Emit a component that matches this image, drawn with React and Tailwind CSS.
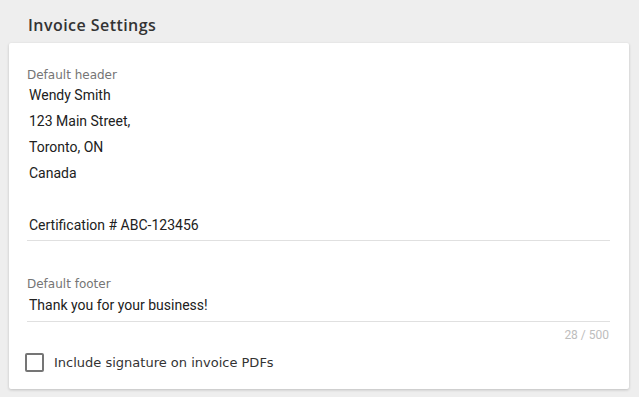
const headerLines = ['Wendy Smith', '123 Main Street,', 'Toronto, ON', 'Canada', '', 'Certification # ABC-123456']

const App = () => {
  return (
    <div className="w-[639px] h-[397px] bg-[#eeeeee] overflow-hidden">
      <h1 className="pl-[28px] pt-[14px] h-[43px] text-[16px] leading-[22px] font-semibold tracking-[0.45px] text-[#333333] font-['Open_Sans',sans-serif]">
        Invoice Settings
      </h1>

      <div className="ml-[9px] w-[620px] h-[346px] bg-white rounded-[2px] shadow-[0_1px_3px_rgba(0,0,0,0.2)] pl-[18px] pr-[19px] pt-[25px]">
        <label className="block text-[12px] leading-[14px] text-[#757575] font-['DejaVu_Sans',sans-serif]">
          Default header
        </label>
        <div className="border-b border-[#e0e0e0] pb-[2px] pl-[2px] font-['Roboto',sans-serif] text-[14px] leading-[26px] text-[#212121]">
          {headerLines.map((line, i) => (
            <div key={i} className="h-[26px]">{line}</div>
          ))}
        </div>

        <label className="block mt-[36px] text-[12px] leading-[14px] text-[#757575] font-['DejaVu_Sans',sans-serif]">
          Default footer
        </label>
        <div className="border-b border-[#e0e0e0] pt-[1px] pb-[3px] pl-[2px] font-['Roboto',sans-serif] text-[14px] leading-[26px] text-[#212121]">
          Thank you for your business!
        </div>
        <div className="mt-[5px] text-right text-[12px] leading-[16px] text-[#bdbdbd] font-['Roboto',sans-serif] pr-[1px]">
          28 / 500
        </div>

        <label className="mt-[10px] ml-[-2px] flex items-center gap-[10px]">
          <span className="w-[19px] h-[19px] border-2 border-[#757575] rounded-[2px]" />
          <span className="text-[13px] leading-[18px] text-[#333333] font-['DejaVu_Sans',sans-serif]">
            Include signature on invoice PDFs
          </span>
        </label>
      </div>
    </div>
  )
}

export default App
